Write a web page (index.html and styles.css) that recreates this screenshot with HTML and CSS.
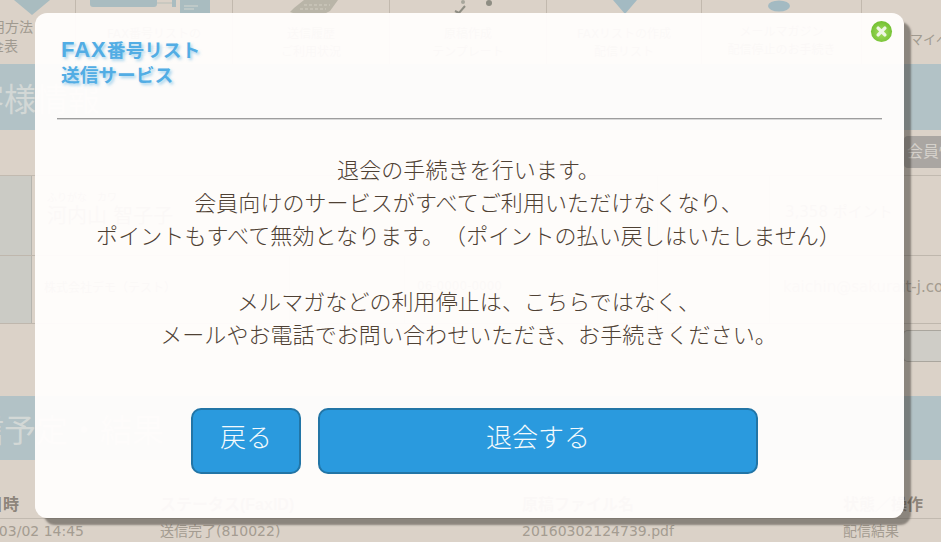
FILE: index.html
```html
<!DOCTYPE html>
<html lang="ja">
<head>
<meta charset="utf-8">
<title>退会</title>
<link rel="stylesheet" href="styles.css">
</head>
<body>
<div class="page">
  <nav class="nav">
    <div class="nav-cell first">
      <svg class="nav-icon ni-shield" viewBox="0 0 36 15"><path d="M0 0H36L18 15Z" fill="#a9bcc0"/></svg>
      <span class="nav-label">ご利用方法<span class="nav-sub">料金表</span></span>
    </div>
    <div class="nav-cell">
      <svg class="nav-icon ni-start" viewBox="0 0 120 14"><rect x="0" y="-8" width="67" height="15" rx="3" fill="#a9bcc0"/><path d="M67 3H82" stroke="#b8bfb8"/><rect x="82" y="0" width="4" height="7" fill="#a9bcc0"/><rect x="90" y="0" width="30" height="14" fill="#a9bcc0"/><path d="M94 6H108M94 9H104" stroke="#d2d6d0"/></svg>
      <span class="nav-text">FAX番号リストの<br>ご案内</span>
    </div>
    <div class="nav-cell">
      <svg class="nav-icon ni-phone" viewBox="0 0 48 14"><path d="M0 12 4 8 14 0H48L40 11 34 14H6Z" fill="#b9b5a8"/><path d="M14 5H40M10 9H36" stroke="#d2cec2" stroke-dasharray="3 2"/></svg>
      <span class="nav-text">送信履歴<br>ご利用状況</span>
    </div>
    <div class="nav-cell">
      <svg class="nav-icon ni-check" viewBox="0 0 46 14"><circle cx="42" cy="3" r="3" fill="#8e8d83"/><circle cx="16" cy="2" r="2" fill="#a7a69b"/><path d="M8 11 12 13 18 6" stroke="#8e8d83" fill="none" stroke-width="2"/></svg>
      <span class="nav-text">原稿作成<br>テンプレート</span>
    </div>
    <div class="nav-cell wide5">
      <svg class="nav-icon ni-tri" viewBox="0 0 24 14"><path d="M0 0H24L12 14Z" fill="#a3bac2"/></svg>
      <span class="nav-text">FAXリストの作成<br>配信リスト</span>
    </div>
    <div class="nav-cell wide6">
      <svg class="nav-icon ni-blob" viewBox="0 0 24 12"><ellipse cx="12" cy="6" rx="11" ry="5.5" fill="#a3bac2"/></svg>
      <span class="nav-text">メールマガジン<br>配信停止のお手続き</span>
    </div>
    <div class="nav-cell last"><span class="nav-label my">マイページ</span></div>
  </nav>
  <div class="band"><span class="band-title">お客様情報</span></div>
  <div class="member-bar"><span class="member-btn">会員情報</span></div>
  <div class="grid">
    <div class="grid-row tall">
      <div class="g-head"></div>
      <div class="g-cell g-name"><small>ふりがな　カワ</small><b>河内山 智子子</b></div>
      <div class="g-cell g-mid"></div>
      <div class="g-point">3,358 ポイント</div>
    </div>
    <div class="grid-row short">
      <div class="g-head"></div>
      <div class="g-cell g-org">株式会社デモ（テスト）</div>
      <div class="g-cell g-a"></div>
      <div class="g-cell g-b">06-0000-0000</div>
      <div class="g-cell g-mid"></div>
      <div class="g-mail">kaichin@sakurait-j.com</div>
    </div>
  </div>
  <div class="edit-bar"><span class="edit-btn"></span></div>
  <div class="band second"><span class="band-title">配信予定・結果</span></div>
  <div class="list-head">
    <span class="c1">日時</span><span class="c2">ステータス(FaxID)</span><span class="c3">原稿ファイル名</span><span class="c4">状態／操作</span>
  </div>
  <div class="list-row">
    <span class="c1"><span>2016/03/02 14:45</span></span><span class="c2">送信完了(810022)</span><span class="c3">20160302124739.pdf</span><span class="c4">配信結果</span>
  </div>
</div>

<section class="modal">
  <svg class="close" viewBox="0 0 24 24" aria-label="閉じる">
    <defs>
      <radialGradient id="g" cx="50%" cy="55%" r="55%">
        <stop offset="0" stop-color="#a6dd62"/>
        <stop offset="1" stop-color="#72c031"/>
      </radialGradient>
    </defs>
    <circle cx="12" cy="12" r="11" fill="url(#g)"/>
    <path d="M8.5 8.5 15.5 15.5M15.5 8.5 8.5 15.5" stroke="#eef6e4" stroke-width="3.6" stroke-linecap="round"/>
  </svg>
  <header class="modal-head">
    <div class="logo"><span class="logo-latin">FAX</span>番号リスト<br>送信サービス</div>
  </header>
  <hr class="rule">
  <p class="message">退会の手続きを行います。<br>会員向けのサービスがすべてご利用いただけなくなり、<br>ポイントもすべて無効となります。（ポイントの払い戻しはいたしません）<br><br>メルマガなどの利用停止は、こちらではなく、<br>メールやお電話でお問い合わせいただき、お手続きください。</p>
  <div class="actions">
    <button class="btn back">戻る</button>
    <button class="btn leave">退会する</button>
  </div>
</section>
</body>
</html>
```
FILE: styles.css
```css
html, body { margin: 0; padding: 0; height: 100%; overflow: hidden; }
body { background: #dbd2c8; font-family: "DejaVu Sans", "Noto Sans CJK JP", sans-serif; color: #8d857b; position: relative; text-spacing-trim: space-all; }
.page { width: 941px; height: 542px; overflow: hidden; }

.nav { display: flex; height: 64px; }
.nav-cell { width: 157px; box-sizing: border-box; border-right: 1px solid #c2b9ae; position: relative; flex: none; }
.nav-cell.first { width: 76px; }
.nav-cell.wide5 { width: 155px; }
.nav-cell.wide6 { width: 160px; }
.nav-cell.last { width: 79px; border-right: 0; }
.nav-icon { display: block; }
.ni-shield { width: 36px; height: 15px; margin-left: 14px; }
.ni-start { width: 120px; height: 14px; margin-left: 14px; }
.ni-phone { width: 48px; height: 14px; margin-left: 57px; }
.ni-check { width: 46px; height: 14px; margin-left: 57px; }
.ni-tri { width: 24px; height: 14px; margin-left: 66px; }
.ni-blob { width: 24px; height: 12px; margin-left: 65px; }
.nav-text { display: block; text-align: center; font-size: 12px; line-height: 18px; margin-top: 11px; white-space: nowrap; }
.nav-label { position: absolute; right: 42px; top: 18px; font-size: 14px; line-height: 19px; white-space: nowrap; text-align: right; color: #a09a90; }
.nav-sub { display: block; margin-right: 15px; }
.nav-label.my { left: 48px; right: auto; top: 30px; font-size: 13px; }

.band { height: 66px; background: #b2c2c6; display: flex; align-items: center; overflow: hidden; }
.band-title { font-size: 32px; color: #d3d8d6; white-space: nowrap; margin-left: -60px; }

.member-bar { height: 45px; display: flex; justify-content: flex-end; align-items: flex-end; padding-bottom: 7px; box-sizing: border-box; }
.member-btn { width: 37px; height: 32px; background: #aaa6a2; color: #d5d1cb; font-size: 16px; line-height: 31px; border-radius: 4px 0 0 4px; padding-left: 3px; box-sizing: border-box; white-space: nowrap; overflow: hidden; }

.grid { border-top: 1px solid #c2bab0; }
.grid-row { display: flex; border-bottom: 1px solid #bfb7ad; box-sizing: border-box; }
.grid-row.tall { height: 80px; }
.grid-row.short { height: 68px; }
.g-head { width: 32px; background: #cbcbc5; border-right: 1px solid #b5b4ae; box-sizing: border-box; flex: none; }
.g-cell { box-sizing: border-box; border-right: 1px solid #c8c0b6; flex: none; white-space: nowrap; }
.g-name { width: 626px; padding: 13px 15px; display: flex; flex-direction: column; font-size: 12px; }
.g-name small { font-size: 10px; }
.g-name b { font-weight: 400; font-size: 20px; line-height: 24px; }
.g-mid { width: 112px; }
.g-org { width: 258px; padding: 22px 12px; font-size: 12px; }
.g-a { width: 115px; }
.g-b { width: 253px; padding: 23px 12px; font-size: 12px; }
.g-point { padding: 24px 0 0 15px; font-size: 15px; white-space: nowrap; }
.g-mail { padding: 22px 0 0 13px; font-size: 15px; white-space: nowrap; color: #a39b90; }

.edit-bar { height: 72px; display: flex; justify-content: flex-end; align-items: flex-start; padding-top: 6px; box-sizing: border-box; }
.edit-btn { width: 38px; height: 32px; background: #cfcdc7; border: 1px solid #aaa69e; border-right: 0; border-radius: 5px 0 0 5px; box-sizing: border-box; }

.band.second { height: 64px; }

.list-head, .list-row { display: flex; white-space: nowrap; }
.list-head { height: 59px; padding-top: 34px; box-sizing: border-box; font-family: "Liberation Sans", "Noto Sans CJK JP", sans-serif; font-weight: 700; border-bottom: 1px solid #c2bab0; font-size: 16px; line-height: 22px; }
.list-row { height: 23px; line-height: 24px; color: #a49c91; font-size: 14px; }
.c1 { flex: none; text-align: right; box-sizing: border-box; }
.list-head .c1 { width: 32px; margin-left: -13px; }
.list-row .c1 { width: 84px; display: flex; justify-content: flex-end; }
.c2 { flex: none; width: 362px; }
.list-head .c2 { margin-left: 141px; }
.list-row .c2 { margin-left: 76px; }
.c3 { width: 321px; flex: none; }
.c4 { flex: none; }

.modal { position: absolute; left: 35px; top: 13px; width: 869px; height: 505px; box-sizing: border-box; padding: 0 22px; background: rgba(255, 253, 252, .96); border-radius: 12px; box-shadow: 8px 8px 2px -1px rgba(60, 55, 50, .5); font-family: "Noto Sans CJK JP", sans-serif; }
.close { position: absolute; left: 835px; top: 7px; width: 23px; height: 23px; }
.modal-head { height: 105px; padding: 23px 0 0 4px; box-sizing: border-box; }
.logo { font-size: 18.7px; line-height: 25px; font-weight: 700; color: #52ade4; text-shadow: 2px 2px 3px rgba(82, 173, 228, .5); white-space: nowrap; }
.logo-latin { font-family: "Liberation Sans", sans-serif; font-size: 22px; letter-spacing: 1px; line-height: 1; }
.rule { margin: 0; border: 0; height: 1px; background: #9d9d9d; box-shadow: 0 1px 0 #d8d8d8; }
.message { margin: 33px 0 0; padding-right: 2px; text-align: center; font-size: 22px; line-height: 33px; font-weight: 300; letter-spacing: .08px; color: #4f4134; white-space: nowrap; }
.actions { display: flex; gap: 17px; margin: 58px 0 0; padding-left: 134px; }
.btn { height: 66px; background: #2a9ade; color: #f4fafd; border: 2px solid #2275a6; border-radius: 10px; font: 300 26px/1 "Noto Sans CJK JP", sans-serif; padding: 0 0 10px; box-sizing: border-box; text-spacing-trim: space-all; }
.btn.back { width: 110px; }
.btn.leave { width: 440px; }
```
